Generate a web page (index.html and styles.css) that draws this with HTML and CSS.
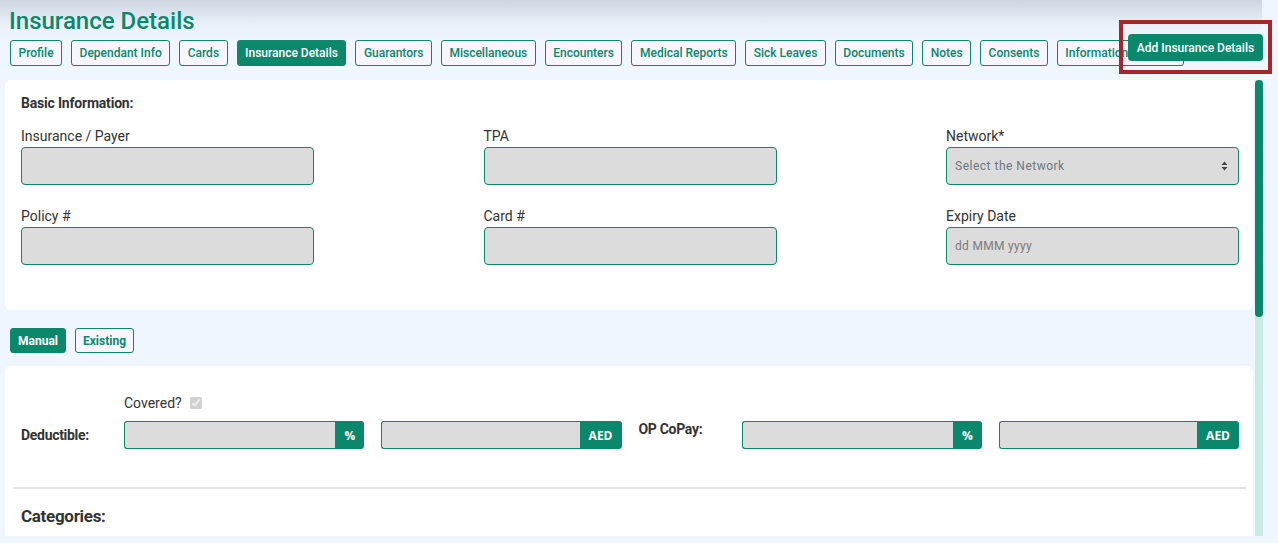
FILE: index.html
```html
<!DOCTYPE html>
<html lang="en">
<head>
  <meta charset="UTF-8" />
  <meta name="viewport" content="width=device-width, initial-scale=1.0"/>
  <title>Insurance Details</title>
  <link rel="stylesheet" href="styles.css">
</head>
<body>
  <div class="page">
    <h1 class="page-title">Insurance Details</h1>

    <nav class="tabs">
      <button class="tab">Profile</button>
      <button class="tab">Dependant Info</button>
      <button class="tab">Cards</button>
      <button class="tab active">Insurance Details</button>
      <button class="tab">Guarantors</button>
      <button class="tab">Miscellaneous</button>
      <button class="tab">Encounters</button>
      <button class="tab">Medical Reports</button>
      <button class="tab">Sick Leaves</button>
      <button class="tab">Documents</button>
      <button class="tab">Notes</button>
      <button class="tab">Consents</button>
      <button class="tab">Information Request</button>
    </nav>

    <div class="highlight">
      <button class="btn-add">Add Insurance Details</button>
    </div>

    <div class="scroll-wrap">
      <div class="scroll-area">
        <section class="card basic-card">
          <h3 class="card-heading">Basic Information:</h3>
          <div class="field-row">
            <div class="field">
              <label>Insurance / Payer</label>
              <input type="text" class="form-input">
            </div>
            <div class="field">
              <label>TPA</label>
              <input type="text" class="form-input">
            </div>
            <div class="field">
              <label>Network*</label>
              <div class="select-wrap">
                <select class="form-input form-select">
                  <option>Select the Network</option>
                </select>
                <svg class="select-arrow" width="7" height="10" viewBox="0 0 7 10">
                  <path d="M3.5 0.5 L6.5 4 H0.5 Z M3.5 9.5 L6.5 6 H0.5 Z" fill="#444"/>
                </svg>
              </div>
            </div>
          </div>
          <div class="field-row">
            <div class="field">
              <label>Policy #</label>
              <input type="text" class="form-input">
            </div>
            <div class="field">
              <label>Card #</label>
              <input type="text" class="form-input">
            </div>
            <div class="field">
              <label>Expiry Date</label>
              <input type="text" class="form-input" placeholder="dd MMM yyyy">
            </div>
          </div>
        </section>

        <div class="mode-toggle">
          <button class="btn-sm active">Manual</button>
          <button class="btn-sm">Existing</button>
        </div>

        <section class="card coverage-card">
          <div class="cover-grid">
            <div class="cover-block">
              <div class="covered-line">
                <span>Covered?</span>
                <input type="checkbox" class="covered-check" checked disabled>
              </div>
              <div class="cover-row">
                <span class="cover-label">Deductible:</span>
                <div class="input-group">
                  <input type="text" class="group-input">
                  <span class="addon">%</span>
                </div>
                <div class="input-group">
                  <input type="text" class="group-input">
                  <span class="addon">AED</span>
                </div>
              </div>
            </div>
            <div class="cover-block">
              <div class="cover-row">
                <span class="cover-label top">OP CoPay:</span>
                <div class="input-group">
                  <input type="text" class="group-input">
                  <span class="addon">%</span>
                </div>
                <div class="input-group">
                  <input type="text" class="group-input">
                  <span class="addon">AED</span>
                </div>
              </div>
            </div>
          </div>

          <hr class="divider">

          <h3 class="categories-title">Categories:</h3>
        </section>
      </div>

      <div class="scrollbar">
        <div class="scrollbar-thumb"></div>
      </div>
    </div>
  </div>
</body>
</html>
```

FILE: styles.css
```css
* {
  margin: 0;
  padding: 0;
  box-sizing: border-box;
}

body {
  width: 100%;
  height: 100vh;
  background: #eff6fe;
  font-family: Roboto, "Liberation Sans", sans-serif;
  color: #333;
  overflow: hidden;
}

.page {
  position: relative;
  height: 100%;
}

.page::before {
  content: '';
  position: absolute;
  top: 0;
  left: 0;
  width: 1262px;
  height: 42px;
  background: linear-gradient(to bottom, rgba(160, 168, 185, 0.42), rgba(200, 210, 225, 0.15) 60%, rgba(239, 246, 254, 0));
  border-radius: 0 0 20px 0;
  pointer-events: none;
}

.page-title {
  position: relative;
  font-size: 24px;
  font-weight: 500;
  line-height: 28px;
  color: #0b876c;
  padding: 7px 0 0 9px;
}

.tabs {
  display: flex;
  gap: 9px;
  padding-left: 10px;
  margin-top: 5px;
}

.tab {
  height: 26px;
  padding: 0 7.5px;
  font-family: Roboto, sans-serif;
  font-size: 12px;
  font-weight: 500;
  color: #0b876c;
  background: #f7f5fd;
  border: 1px solid #0b876c;
  border-radius: 3px;
  white-space: nowrap;
}

.tab.active {
  background: #0b876c;
  color: #fff;
}

.highlight {
  position: absolute;
  top: 20px;
  left: 1119px;
  width: 153px;
  height: 54px;
  border: 4px solid #a4272b;
  display: flex;
  justify-content: flex-end;
  align-items: flex-start;
  padding: 10px 5px 0 0;
}

.btn-add {
  height: 27px;
  width: 135px;
  font-family: Roboto, sans-serif;
  font-size: 12px;
  font-weight: 500;
  color: #fff;
  background: #0b876c;
  border: none;
  border-radius: 4px;
  white-space: nowrap;
}

.scroll-wrap {
  display: flex;
  gap: 2px;
  height: 456px;
  margin: 14px 0 0 5px;
}

.scroll-area {
  width: 1248px;
  overflow: hidden;
}

.scrollbar {
  width: 8px;
  background: #c8ebe3;
}

.scrollbar-thumb {
  height: 237px;
  background: #0b876c;
  border-radius: 4px;
}

.card {
  background: #fff;
  border-radius: 6px;
}

.basic-card {
  padding: 13px 14px 45px 16px;
}

.card-heading {
  font-size: 14px;
  font-weight: 700;
  line-height: 20px;
  color: #333;
  letter-spacing: -0.2px;
}

.field-row {
  display: flex;
  justify-content: space-between;
  margin-top: 13px;
}

.field-row + .field-row {
  margin-top: 21px;
}

.field {
  width: 293px;
}

.field label {
  display: block;
  font-size: 14px;
  line-height: 20px;
  color: #333;
  margin-bottom: 1px;
}

.form-input {
  display: block;
  width: 100%;
  height: 38px;
  padding: 0 8px;
  background: #dcdcdc;
  border: 1px solid #0b876c;
  border-radius: 4px;
  font-family: Roboto, sans-serif;
  font-size: 12px;
  color: #333;
  outline: none;
}

.form-input::placeholder {
  color: #7a7a7a;
  letter-spacing: 0.3px;
}

.select-wrap {
  position: relative;
}

.form-select {
  appearance: none;
  color: #6f7780;
  letter-spacing: 0.5px;
}

.select-arrow {
  position: absolute;
  right: 11px;
  top: 14px;
}

.mode-toggle {
  display: flex;
  gap: 9px;
  margin: 18px 0 13px 5px;
}

.btn-sm {
  height: 25px;
  padding: 0 7px;
  font-family: Roboto, sans-serif;
  font-size: 12px;
  font-weight: 700;
  color: #0b876c;
  background: #f7f5fd;
  border: 1px solid #0b876c;
  border-radius: 3px;
}

.btn-sm.active {
  background: #0b876c;
  color: #fff;
}

.coverage-card {
  padding: 28px 14px 200px 16px;
}

.cover-grid {
  display: grid;
  grid-template-columns: 1fr 1fr;
  column-gap: 17px;
  align-items: end;
}

.covered-line {
  display: flex;
  align-items: center;
  padding-left: 103px;
  font-size: 14px;
  line-height: 18px;
  margin-bottom: 9px;
}

.covered-check {
  width: 12px;
  height: 12px;
  margin: 0 0 0 8px;
}

.cover-row {
  display: flex;
  align-items: center;
}

.cover-label {
  width: 103px;
  flex: none;
  font-size: 14px;
  font-weight: 700;
  color: #333;
  letter-spacing: -0.3px;
}

.cover-label.top {
  align-self: flex-start;
  line-height: 17px;
}

.input-group {
  flex: 1;
  display: flex;
  height: 28px;
}

.input-group + .input-group {
  margin-left: 17px;
}

.group-input {
  flex: 1;
  min-width: 0;
  background: #dcdcdc;
  border: 1px solid #0b876c;
  border-right: none;
  border-radius: 3px 0 0 3px;
  outline: none;
}

.addon {
  display: flex;
  align-items: center;
  padding: 0 9px;
  background: #0b876c;
  color: #fff;
  font-family: "Open Sans", sans-serif;
  font-size: 12px;
  font-weight: 700;
  border-radius: 0 3px 3px 0;
}

.divider {
  border: none;
  height: 2px;
  background: #e6e6e6;
  margin: 38px -7px 0 -8px;
}

.categories-title {
  font-size: 17px;
  font-weight: 700;
  line-height: 20px;
  color: #333;
  letter-spacing: -0.3px;
  margin-top: 17px;
}
```
